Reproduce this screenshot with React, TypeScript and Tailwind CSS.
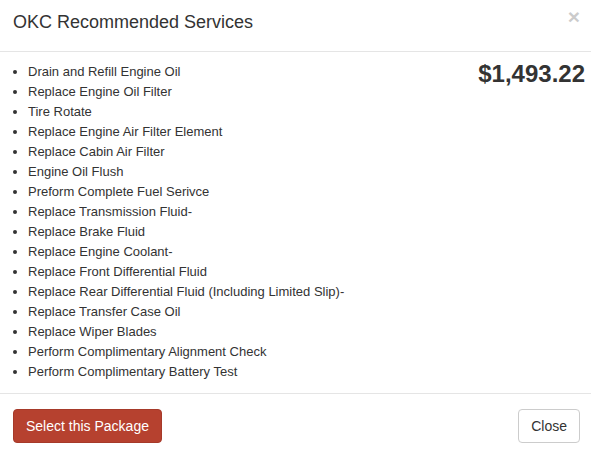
const services = [
  'Drain and Refill Engine Oil',
  'Replace Engine Oil Filter',
  'Tire Rotate',
  'Replace Engine Air Filter Element',
  'Replace Cabin Air Filter',
  'Engine Oil Flush',
  'Preform Complete Fuel Serivce',
  'Replace Transmission Fluid-',
  'Replace Brake Fluid',
  'Replace Engine Coolant-',
  'Replace Front Differential Fluid',
  'Replace Rear Differential Fluid (Including Limited Slip)-',
  'Replace Transfer Case Oil',
  'Replace Wiper Blades',
  'Perform Complimentary Alignment Check',
  'Perform Complimentary Battery Test',
];

export default function App() {
  return (
    <div className="w-[591px] h-[453px] bg-white text-[#333] font-['Liberation_Sans',Arial,sans-serif] overflow-hidden">
      <div className="h-[52px] border-b border-[#e5e5e5] flex items-center justify-between pl-[13px] pr-[11px]">
        <h4 className="text-[18px] leading-[26px] pb-[8px]">OKC Recommended Services</h4>
        <button className="text-[21px] leading-none font-bold text-black opacity-20 self-start mt-[6px]">×</button>
      </div>

      <div className="flex justify-between pt-[10px] pb-[10px] pl-[15px] pr-[6px] h-[341px]">
        <ul className="list-disc pl-[13px] text-[13px] leading-[20px]">
          {services.map((s) => (
            <li key={s}>{s}</li>
          ))}
        </ul>
        <div className="text-[24px] leading-[24px] font-bold">$1,493.22</div>
      </div>

      <div className="border-t border-[#e5e5e5] flex justify-between items-start pt-[15px] pl-[13px] pr-[11px]">
        <button className="h-[34px] px-[12px] rounded bg-[#b6412f] border border-[#a63a2a] text-white text-[14px]">
          Select this Package
        </button>
        <button className="h-[34px] px-[12px] rounded bg-white border border-[#ccc] text-[#333] text-[14px]">
          Close
        </button>
      </div>
    </div>
  );
}
